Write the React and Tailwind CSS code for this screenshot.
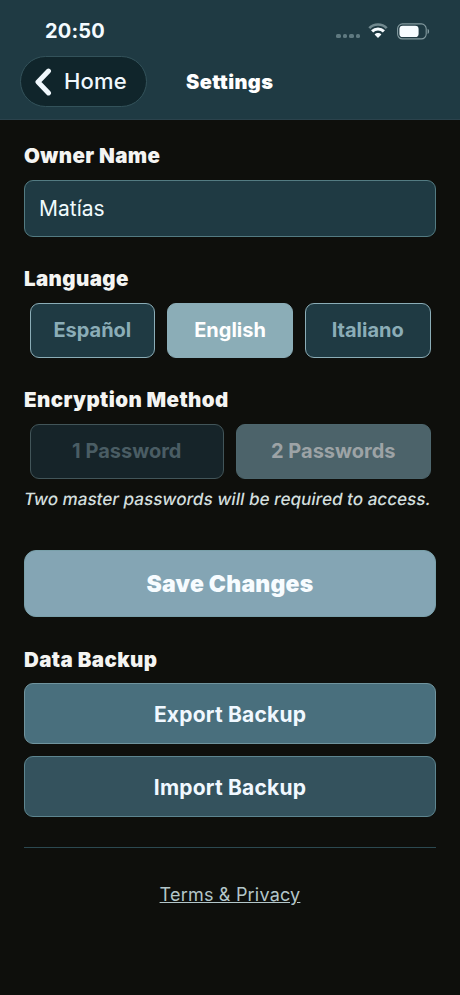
import clsx from 'clsx'

const languages = ['Español', 'English', 'Italiano']
const methods = ['1 Password', '2 Passwords']

function StatusBar() {
  return (
    <div className="flex h-[56px] items-start justify-between pl-[45px] pr-[30px]">
      <span className="mt-[19px] text-[20px] leading-6 font-bold tracking-[0.2px] text-[#f4fbff]">20:50</span>
      <div className="mt-[20px] flex h-[22px] items-center">
        <div className="mt-[10px] mr-[8px] flex gap-[2px]">
          {[0, 1, 2, 3].map(i => (
            <span key={i} className="h-[4.4px] w-[4.4px] rounded-[1.6px] bg-[#5f7980]" />
          ))}
        </div>
        <svg className="mr-[9px]" width="20" height="16" viewBox="0 0 20 16" fill="none">
          <path d="M1.3 5.1C6.1 .3 13.9 .3 18.7 5.1" stroke="#71898f" strokeWidth="2.7" />
          <path d="M4.1 8.4C7.4 5.1 12.6 5.1 15.9 8.4" stroke="#f7fcff" strokeWidth="3" />
          <path d="M6.6 11.4C8.5 9.5 11.5 9.5 13.4 11.4L10 15Z" fill="#f7fcff" />
        </svg>
        <svg width="33" height="17" viewBox="0 0 33 17" fill="none">
          <rect x=".6" y=".9" width="28.6" height="15" rx="4.8" stroke="#849ba0" strokeWidth="1.1" />
          <rect x="2.4" y="2.7" width="19.2" height="11.4" rx="3.4" fill="#f7fcff" />
          <path d="M30.6 5.8C32.6 6.6 32.6 10.2 30.6 11Z" fill="#849ba0" />
        </svg>
      </div>
    </div>
  )
}

function Label({ className, children }) {
  return (
    <h2 className={clsx('text-[20.5px] leading-6 font-black tracking-[0.4px] text-[#f4f4f2]', className)}>
      {children}
    </h2>
  )
}

function Option({ active, disabled, children }) {
  return (
    <button
      disabled={disabled}
      className={clsx(
        'h-[55px] flex-1 rounded-[9px] border pb-[2px] text-[20px] font-bold',
        active && !disabled && 'border-[#8badb7] bg-[#8badb7] text-white',
        !active && !disabled && 'border-[#8badb7] bg-[#1f3a43] text-[#8badb7]',
        active && disabled && 'border-[#4d666d] bg-[#4c636a] text-[#9da3a6]',
        !active && disabled && 'border-[#425559] bg-[#162429] text-[#4a5d64]'
      )}
    >
      {children}
    </button>
  )
}

export default function App() {
  return (
    <div className="min-h-[995px] w-[460px] bg-[#0e0f0c] font-['Inter',sans-serif]">
      <header className="h-[120px] border-b border-[#2b424c] bg-[#1f3a43]">
        <StatusBar />
        <div className="flex items-center pl-[20px]">
          <button className="flex h-[51px] w-[127px] items-center rounded-full border border-[#33525a] bg-[#10252b] pl-[13px] text-[#f0f8fd]">
            <svg width="18" height="28" viewBox="0 0 18 28" fill="none">
              <path d="M14.5 3.1L4 14L14.5 24.9" stroke="currentColor" strokeWidth="5" strokeLinecap="round" strokeLinejoin="round" />
            </svg>
            <span className="ml-[12px] text-[22px] font-medium tracking-[0.2px]">Home</span>
          </button>
          <h1 className="ml-[39px] text-[20px] font-black tracking-[0.4px] text-white">Settings</h1>
        </div>
      </header>

      <main className="px-[24px] pt-[24px]">
        <Label>Owner Name</Label>
        <input
          className="mt-[12px] block h-[57px] w-full rounded-[9px] border border-[#537b82] bg-[#1f3a43] px-[14px] text-[21px] text-[#f0fafd] outline-none"
          defaultValue="Matías"
        />

        <Label className="mt-[30px]">Language</Label>
        <div className="mt-[12px] flex gap-[12px] px-[5.5px]">
          {languages.map(name => (
            <Option key={name} active={name === 'English'}>{name}</Option>
          ))}
        </div>

        <Label className="mt-[30px]">Encryption Method</Label>
        <div className="mt-[12px] flex gap-[12px] px-[5.5px]">
          {methods.map(name => (
            <Option key={name} active={name === '2 Passwords'} disabled>{name}</Option>
          ))}
        </div>
        <p className="mt-[8px] -skew-x-[10deg] text-[17px] leading-6 font-medium tracking-[0.05px] whitespace-nowrap text-[#d2dedd]">
          Two master passwords will be required to access.
        </p>

        <button className="mt-[39px] block h-[67px] w-full rounded-[12px] border border-[#79a0aa] bg-[#84a5b4] pt-[2px] text-[23px] font-black tracking-[0.2px] text-[#f7fcff]">
          Save Changes
        </button>

        <Label className="mt-[31px]">Data Backup</Label>
        <button className="mt-[11px] block h-[61px] w-full rounded-[9px] border border-[#70949e] bg-[#496f7d] pt-[2px] text-[21px] font-bold tracking-[0.2px] text-[#f0f8ff]">
          Export Backup
        </button>
        <button className="mt-[12px] block h-[61px] w-full rounded-[9px] border border-[#5d858f] bg-[#34525d] pt-[2px] text-[21px] font-bold tracking-[0.2px] text-[#f0f8ff]">
          Import Backup
        </button>

        <div className="mt-[30px] border-t border-[#2c4951] pt-[35px] text-center">
          <a className="text-[18px] leading-6 tracking-[0.2px] text-[#b3c6c9] underline" href="#">Terms &amp; Privacy</a>
        </div>
      </main>
    </div>
  )
}
